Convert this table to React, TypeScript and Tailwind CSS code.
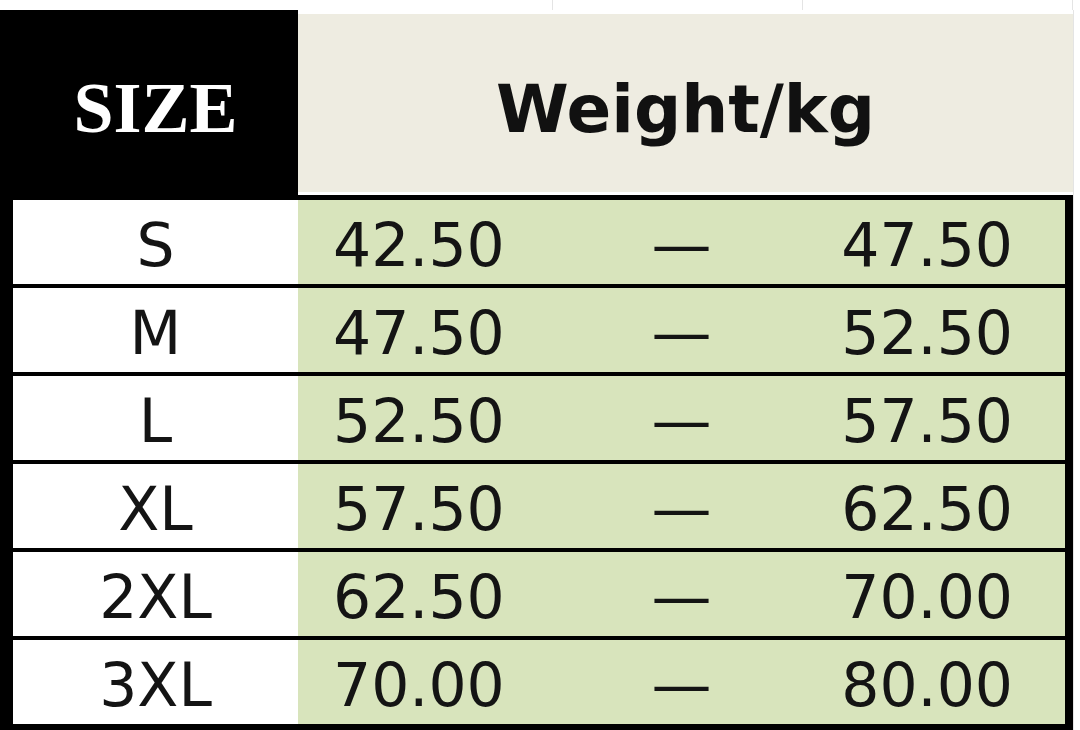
const rows: [string, string, string][] = [
  ['S', '42.50', '47.50'],
  ['M', '47.50', '52.50'],
  ['L', '52.50', '57.50'],
  ['XL', '57.50', '62.50'],
  ['2XL', '62.50', '70.00'],
  ['3XL', '70.00', '80.00'],
];

const sans = { fontFamily: '"DejaVu Sans", Verdana, sans-serif' };

export default function App() {
  return (
    <div className="w-[1080px] h-[730px] overflow-hidden bg-white flex flex-col">
      {/* faint spreadsheet gridlines above the chart */}
      <div className="h-[10px] flex shrink-0">
        <div className="w-[553px] border-r border-[#e4e4e4]" />
        <div className="w-[250px] border-r border-[#e4e4e4]" />
        <div className="w-[270px] border-r border-[#e4e4e4]" />
      </div>

      {/* header */}
      <div className="h-[185px] flex shrink-0">
        <div className="w-[298px] bg-black flex items-center justify-center pl-[13px] pt-[10px]">
          <span
            className="text-white font-bold text-[72px] leading-none"
            style={{ fontFamily: '"Liberation Serif", "Times New Roman", serif' }}
          >
            SIZE
          </span>
        </div>
        <div className="w-[775px] bg-white flex flex-col">
          <div className="h-[4px]" />
          <div className="flex-1 bg-[#eeece1] flex items-center justify-center pt-[14px]">
            <span className="text-[#111] font-bold text-[66px] leading-none" style={sans}>
              Weight/kg
            </span>
          </div>
          <div className="h-[3px]" />
        </div>
        <div className="flex-1 border-l border-[#e4e4e4]" />
      </div>

      {/* body */}
      <div className="flex">
        <div className="w-[1073px] bg-black pl-[13px] pr-[8px] pt-[5px] pb-[8px] flex flex-col gap-[4px]">
          {rows.map(([size, from, to]) => (
            <div key={size} className="h-[84px] flex text-[60px] leading-none text-[#141414]" style={sans}>
              <div className="w-[285px] bg-white flex items-center justify-center pt-[6px]">{size}</div>
              <div className="flex-1 bg-[#d8e4bc] grid grid-cols-3 items-center pt-[6px]">
                <span className="justify-self-start pl-[35px]">{from}</span>
                <span className="justify-self-center">—</span>
                <span className="justify-self-end pr-[52px]">{to}</span>
              </div>
            </div>
          ))}
        </div>
        <div className="flex-1 border-l border-[#e4e4e4]" />
      </div>
    </div>
  );
}
